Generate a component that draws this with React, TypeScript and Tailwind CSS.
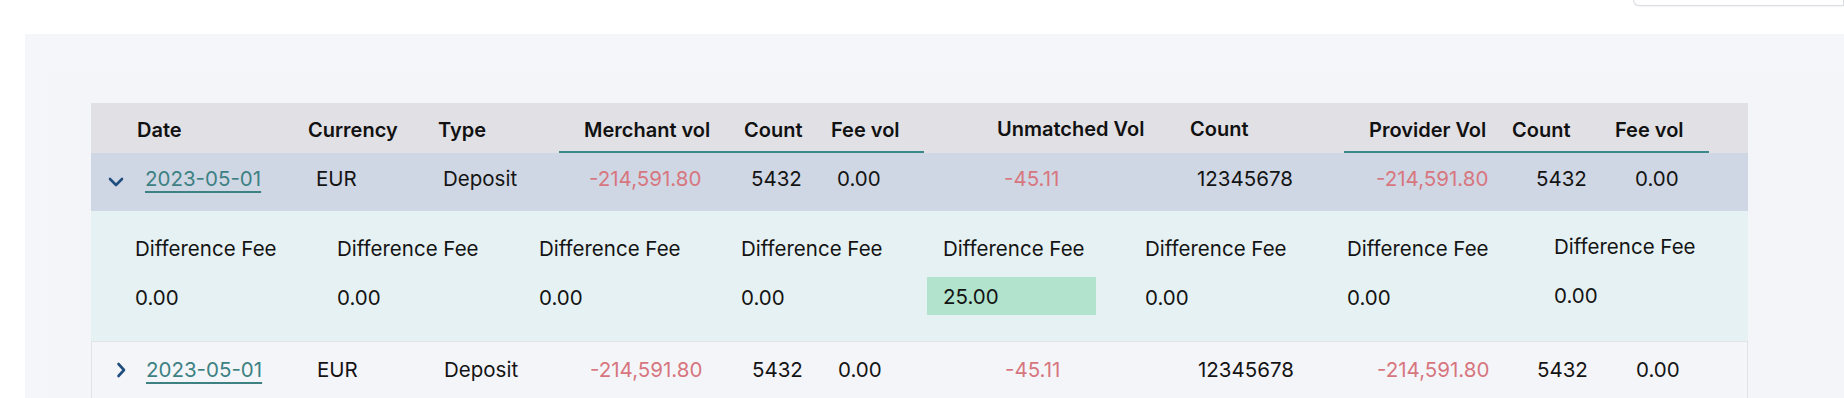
import React from "react";

const font = { fontFamily: "Inter, 'Noto Sans', sans-serif" };

function ChevronDown() {
  return (
    <svg width="16" height="10" viewBox="0 0 16 10" fill="none">
      <path d="M2 2 L8 8 L14 2" stroke="#1f4e7f" strokeWidth="2.6" strokeLinecap="round" strokeLinejoin="round" />
    </svg>
  );
}

function ChevronRight() {
  return (
    <svg width="10" height="16" viewBox="0 0 10 16" fill="none">
      <path d="M2.5 2 L8 8 L2.5 14" stroke="#1f4e7f" strokeWidth="2.6" strokeLinecap="round" strokeLinejoin="round" />
    </svg>
  );
}

function DataRow({ expanded }: { expanded: boolean }) {
  return (
    <div className={`flex items-center h-full text-[20.5px] text-[#141414] ${expanded ? "pb-[5px]" : ""}`}>
      <div className="w-[225px] flex items-center">
        {expanded ? (
          <span className="ml-[17px] w-[16px] flex items-center mt-[5px]"><ChevronDown /></span>
        ) : (
          <span className="ml-[24px] w-[10px] flex items-center"><ChevronRight /></span>
        )}
        <a className={`${expanded ? "ml-[21px]" : "ml-[20px]"} text-[#3d8183] underline underline-offset-[5px] decoration-[1.5px]`}>2023-05-01</a>
      </div>
      <div className="w-[127px]">EUR</div>
      <div className="w-[146px]">Deposit</div>
      <div className="w-[162px] text-[#d7767f]">-214,591.80</div>
      <div className="w-[86px]">5432</div>
      <div className="w-[167px]">0.00</div>
      <div className="w-[193px] text-[#d7767f]">-45.11</div>
      <div className="w-[179px]">12345678</div>
      <div className="w-[160px] text-[#d7767f]">-214,591.80</div>
      <div className="w-[99px]">5432</div>
      <div>0.00</div>
    </div>
  );
}

function DiffCell({ value, highlight, shift, w }: { value: string; highlight?: boolean; shift?: boolean; w: string }) {
  return (
    <div className={`${w} flex flex-col ${shift ? "pt-[24px]" : "pt-[26px]"}`}>
      <div className="leading-[24px] h-[24px]">Difference Fee</div>
      <div className="mt-[16px] h-[38px] flex items-center">
        {highlight ? (
          <div className="-ml-[16px] pl-[16px] w-[169px] h-[38px] flex items-center pt-[3px] bg-[#b1e3cd]">{value}</div>
        ) : (
          <div className="pt-[4px]">{value}</div>
        )}
      </div>
    </div>
  );
}

export default function App() {
  return (
    <div className="w-[1844px] h-[398px] overflow-hidden bg-white" style={font}>
      <div className="h-[34px] flex justify-end">
        <div className="w-[211px] h-[7px] -mt-[1px] border border-[#dcdde3] border-t-0 rounded-bl-[6px] bg-white shadow-[0_1px_1px_rgba(0,0,0,0.04)]" />
      </div>
      <div className="ml-[25px] bg-[#f5f6fa] pt-[38px] h-[364px]">
        <div className="ml-[22px] bg-[#f4f5f9] pt-[31px] h-[326px]">
          <div className="ml-[44px] w-[1657px]">
            {/* Header */}
            <div className="flex h-[50px] bg-[#e1e0e5] text-[20px] font-semibold text-[#111]">
              <div className="w-[217px] pl-[46px] flex items-center pt-[4px]">Date</div>
              <div className="w-[130px] flex items-center pt-[4px]">Currency</div>
              <div className="w-[121px] flex items-center pt-[4px]">Type</div>
              <div className="w-[365px] flex border-b-2 border-[#3b8889]">
                <div className="w-[185px] pl-[25px] flex items-center pt-[6px]">Merchant vol</div>
                <div className="w-[87px] flex items-center pt-[6px]">Count</div>
                <div className="w-[93px] flex items-center pt-[6px]">Fee vol</div>
              </div>
              <div className="w-[266px] pl-[73px] flex items-center pt-[2px]">Unmatched Vol</div>
              <div className="w-[154px] flex items-center pt-[2px]">Count</div>
              <div className="w-[365px] flex border-b-2 border-[#3b8889]">
                <div className="w-[168px] pl-[25px] flex items-center pt-[6px]">Provider Vol</div>
                <div className="w-[103px] flex items-center pt-[6px]">Count</div>
                <div className="w-[94px] flex items-center pt-[6px]">Fee vol</div>
              </div>
              <div className="flex-1" />
            </div>
            {/* Row 1 expanded */}
            <div className="h-[58px] bg-[#d0d7e4]">
              <DataRow expanded />
            </div>
            {/* Expanded details */}
            <div className="h-[130px] bg-[#e6f1f3] flex pl-[44px] text-[20.5px] text-[#141414]">
              <DiffCell w="w-[202px]" value="0.00" />
              <DiffCell w="w-[202px]" value="0.00" />
              <DiffCell w="w-[202px]" value="0.00" />
              <DiffCell w="w-[202px]" value="0.00" />
              <DiffCell w="w-[202px]" value="25.00" highlight />
              <DiffCell w="w-[202px]" value="0.00" />
              <DiffCell w="w-[207px]" value="0.00" />
              <DiffCell w="w-[180px]" value="0.00" shift />
            </div>
            {/* Row 2 */}
            <div className="h-[58px] bg-[#f4f5f9] border border-[#e2e3e7]">
              <DataRow expanded={false} />
            </div>
          </div>
        </div>
      </div>
    </div>
  );
}
